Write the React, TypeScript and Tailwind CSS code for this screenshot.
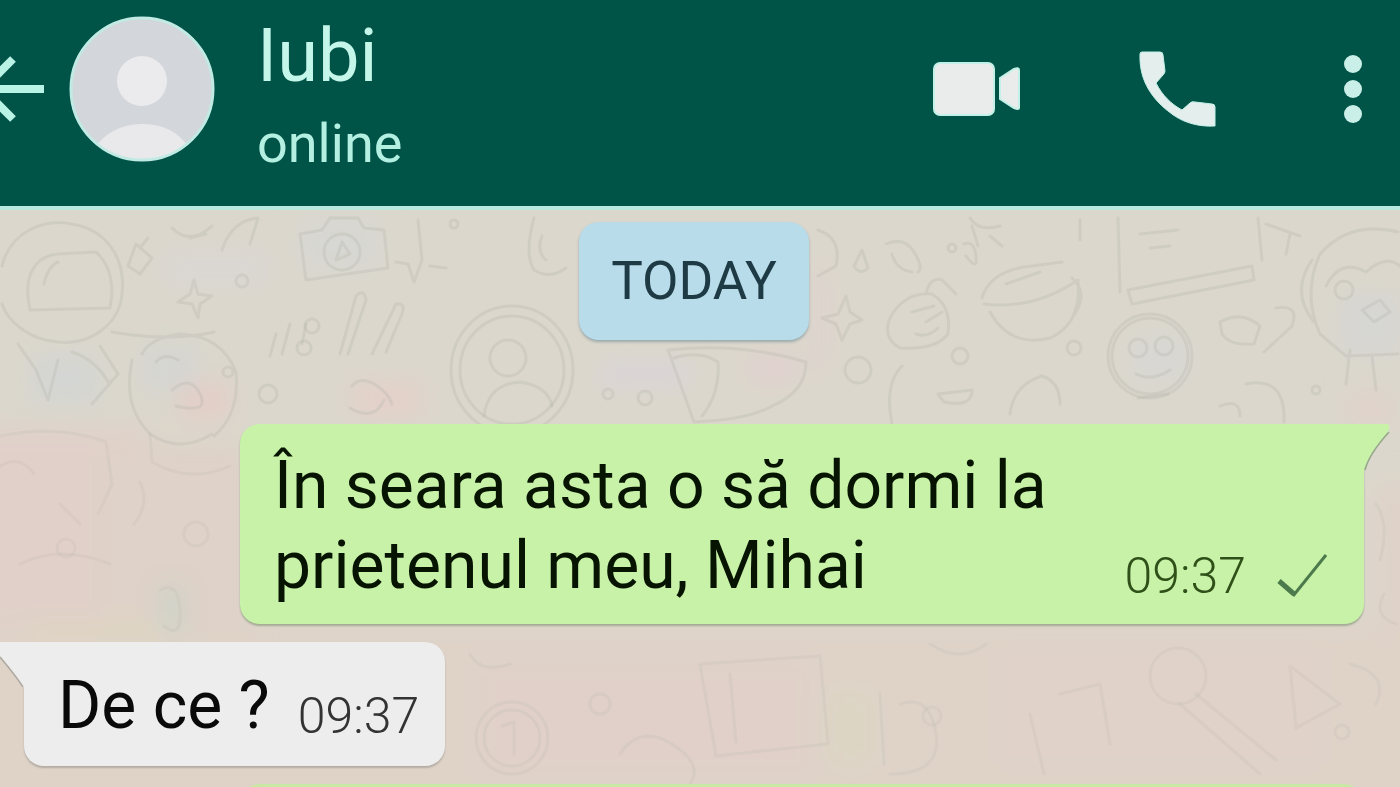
import type { ReactNode } from "react";

type Message = { id: number; text: string; time: string; mine: boolean };

const messages: Message[] = [
  { id: 1, text: "În seara asta o să dormi la prietenul meu, Mihai", time: "09:37", mine: true },
  { id: 2, text: "De ce ?", time: "09:37", mine: false },
];

function BackIcon() {
  return (
    <svg viewBox="0 0 44 72" className="h-[72px] w-11" fill="none" stroke="#b9f3e6" strokeWidth="8">
      <path d="M-8 36H44M13 6L-17 36L13 66" />
    </svg>
  );
}

function Avatar() {
  return (
    <svg viewBox="0 0 146 146" className="h-[146px] w-[146px]">
      <defs>
        <clipPath id="avatar">
          <circle cx="73" cy="73" r="72" />
        </clipPath>
      </defs>
      <g clipPath="url(#avatar)">
        <rect width="146" height="146" fill="#d3d6da" />
        <circle cx="73" cy="65" r="25" fill="#ebebee" />
        <path d="M24 146V134C36 116 54 108 74 108S110 116 122 134V146Z" fill="#e9e9ec" />
      </g>
      <circle cx="73" cy="73" r="71" fill="none" stroke="#c0eae3" strokeWidth="3" />
    </svg>
  );
}

function VideoIcon() {
  return (
    <svg viewBox="0 0 88 56" className="h-14 w-[88px]" fill="#e9eceb" stroke="#c3f1e8" strokeWidth="2">
      <rect x="1" y="2" width="60" height="52" rx="6" />
      <path d="M67 17L81 8Q86 6 86 9V47Q86 49 81 47L67 38Z" />
    </svg>
  );
}

function PhoneIcon() {
  return (
    <svg viewBox="0 0 78 78" className="h-[78px] w-[78px]" fill="#e3eeed" stroke="#c3f1e8" strokeWidth="1">
      <path d="M3 2H21Q24 2 24 5L26 21Q26 23 24 25L17 33C23 45 32 54 43 60L51 53Q53 51 56 52L73 54Q76 54 76 57V76C58 77 42 72 29 61C10 46 0 27 1 4Q1 2 3 2Z" />
    </svg>
  );
}

function MoreIcon() {
  return (
    <svg viewBox="0 0 20 70" className="h-[70px] w-5" fill="#c9efe8">
      <circle cx="10" cy="10" r="9" />
      <circle cx="10" cy="35" r="9" />
      <circle cx="10" cy="60" r="9" />
    </svg>
  );
}

function CheckIcon() {
  return (
    <svg viewBox="0 0 52 46" className="h-[46px] w-[52px]" fill="none" stroke="#4c7a4c">
      <path d="M3 28L18 41" strokeWidth="5" />
      <path d="M17 43L50 2" strokeWidth="3" />
    </svg>
  );
}

function IconButton({ label, children }: { label: string; children: ReactNode }) {
  return (
    <button type="button" aria-label={label} className="flex h-[146px] shrink-0 items-center">
      {children}
    </button>
  );
}

function Wallpaper() {
  return (
    <svg
      viewBox="0 206 1400 581"
      preserveAspectRatio="xMidYMin slice"
      className="absolute inset-0 h-full w-full"
      aria-hidden="true"
    >
      <defs>
        <filter id="tint" x="-30%" y="-30%" width="160%" height="160%">
          <feGaussianBlur stdDeviation="12" />
        </filter>
      </defs>
      <rect y="206" width="1400" height="581" fill="#dbd7cc" />

      {/* soft colour patches */}
      <g filter="url(#tint)">
        <rect x="-40" y="425" width="190" height="200" fill="#e1d0c9" />
        <rect x="100" y="440" width="150" height="190" fill="#dfd2c8" />
        <rect x="-40" y="620" width="1480" height="200" fill="#dfd3c8" />
        <rect x="480" y="660" width="330" height="110" fill="#e0d0c9" />
        <rect x="1000" y="650" width="320" height="110" fill="#e0d1c9" />
        <rect x="1372" y="480" width="60" height="160" fill="#dfd3c9" />
        <rect x="160" y="245" width="110" height="40" fill="#dad7d3" />
        <rect x="30" y="350" width="70" height="50" fill="#d4d6d3" />
        <rect x="140" y="340" width="60" height="50" fill="#d5d6d2" />
        <rect x="300" y="215" width="80" height="50" fill="#d7d7d3" />
        <rect x="180" y="380" width="50" height="34" fill="#e4cdc7" />
        <rect x="352" y="378" width="70" height="34" fill="#e4d0c9" />
        <rect x="600" y="360" width="90" height="20" fill="#d9d4da" />
        <rect x="750" y="352" width="44" height="24" fill="#e2cfd0" />
        <rect x="812" y="260" width="18" height="110" fill="#dfd3cf" />
        <rect x="1130" y="330" width="60" height="50" fill="#d8d7d3" />
        <rect x="1340" y="290" width="60" height="60" fill="#d6d6d3" />
        <rect x="1350" y="390" width="40" height="30" fill="#e2d1cc" />
        <rect x="158" y="580" width="28" height="50" fill="#d0d3c9" />
        <rect x="30" y="620" width="130" height="14" fill="#ded6bf" />
        <rect x="830" y="690" width="40" height="70" fill="#dcd5c3" />
      </g>

      <g fill="none" stroke="#b9b8ae" strokeWidth="3" strokeOpacity="0.32" strokeLinecap="round" strokeLinejoin="round">
        {/* astronaut */}
        <path d="M2 262C10 228 44 214 72 220C108 226 126 256 122 290C120 318 92 342 58 338C30 336 8 318 2 300" />
        <path d="M30 306C22 270 36 252 58 250L96 248C112 262 114 284 110 304Z" />
        <path d="M44 280Q48 262 58 258M18 340L36 366L48 396M48 396L58 356M100 342L118 370L92 400M72 348Q96 356 108 378" />
        <path d="M136 240L152 254L140 270L128 262ZM140 244L148 234M172 224Q190 242 212 222M190 234L206 230" />
        <path d="M194 276L198 290L212 292L200 300L198 314L192 300L178 298L190 290Z" />
        <circle cx="242" cy="277" r="6" />
        <path d="M222 246Q232 216 258 214L250 240" />

        {/* camera */}
        <path d="M300 230L322 226L330 214H358L364 224L384 226L388 264L306 276Z" />
        <circle cx="342" cy="248" r="18" />
        <path d="M336 256L342 238L350 250Z" />
        <path d="M276 330L270 352M290 320L282 350M306 320L302 340M340 350L356 292Q364 284 366 296L348 350M372 350L396 300Q406 298 402 310L386 348" />
        <circle cx="312" cy="322" r="7" />
        <circle cx="304" cy="344" r="7" />
        <path d="M418 216L422 256L414 278L408 260L396 258M430 262L446 264" />

        {/* face */}
        <path d="M112 328Q170 338 214 328M142 350Q150 334 180 330Q222 332 236 368Q240 410 214 432" />
        <path d="M132 356C126 386 130 410 150 430Q180 450 212 430M156 358Q164 348 178 356M172 386Q190 370 200 390T176 402" />
        <circle cx="268" cy="390" r="9" />
        <circle cx="228" cy="368" r="5" />
        <path d="M352 382Q360 372 374 380T392 400M350 404Q374 418 384 396" />

        {/* avatar coin */}
        <ellipse cx="512" cy="366" rx="61" ry="64" />
        <ellipse cx="512" cy="366" rx="52" ry="54" />
        <circle cx="508" cy="354" r="18" />
        <path d="M484 412Q488 380 520 378Q548 382 552 402" />
        <path d="M534 214Q524 250 534 266Q550 276 566 264M542 232Q536 248 546 256" />
        <circle cx="454" cy="220" r="4" />

        {/* pizza slice and small shapes */}
        <path d="M668 346Q740 338 806 358Q806 388 772 402Q748 416 694 418ZM674 354Q700 346 718 358Q720 390 702 412" />
        <circle cx="608" cy="390" r="5" />
        <circle cx="645" cy="394" r="7" />
        <path d="M818 226Q842 234 836 262L818 272M846 292L838 310L822 314L836 320L842 336L850 320L862 316L850 308Z" />
        <path d="M862 246L868 264Q860 272 854 262ZM886 240Q904 232 914 248T918 268M892 250Q896 266 912 268" />
        <circle cx="952" cy="244" r="4" />
        <path d="M964 240Q974 236 976 252T966 252M972 222L978 242M990 232L1002 242" />
        <path d="M970 214Q978 228 1000 222M1080 216V236M1140 230L1178 226M1150 244L1170 242" />

        {/* bear */}
        <path d="M890 314Q904 288 932 290Q952 302 948 330Q936 346 900 344Q882 334 890 314ZM926 290Q930 272 942 276L956 290" />
        <path d="M912 308L934 302M926 318L942 308M916 330Q928 334 938 324" />
        {/* bowl */}
        <path d="M982 294Q990 266 1032 262L1062 258M984 300Q1034 306 1078 276Q1082 320 1050 334Q1010 344 990 308M1006 280L1040 268M1072 274Q1090 290 1072 314" />
        {/* brush */}
        <path d="M1128 286L1252 262L1254 276L1132 300ZM1118 214L1120 288M1258 214L1262 256M1266 220L1300 232M1290 230L1286 250" />
        {/* smiley */}
        <circle cx="1150" cy="352" r="42" />
        <circle cx="1150" cy="352" r="38" />
        <circle cx="1138" cy="344" r="9" />
        <circle cx="1164" cy="342" r="9" />
        <path d="M1136 370Q1152 378 1170 366M1138 394L1168 390" />
        <path d="M1220 318Q1242 306 1260 322L1254 340Q1230 342 1222 330ZM1276 304Q1300 300 1292 322L1264 348" />
        <circle cx="1074" cy="344" r="7" />
        <circle cx="960" cy="352" r="8" />
        <circle cx="858" cy="366" r="13" />
        <path d="M892 420Q884 380 902 362M938 390L972 386Q972 404 944 398ZM1010 410Q1014 380 1042 372Q1060 378 1060 400M1220 402Q1240 394 1240 412M1246 380Q1286 372 1284 418" />
        {/* penguin */}
        <path d="M1398 228Q1350 216 1320 250Q1302 290 1320 330L1346 352L1398 350M1312 256Q1290 288 1314 318M1326 282Q1340 254 1366 268Q1386 250 1400 262M1350 346L1346 380M1372 352L1376 386" />
        <circle cx="1344" cy="286" r="9" />
        <path d="M1362 306L1380 296L1390 308L1374 318Z" />
        <circle cx="1316" cy="386" r="4" />

        {/* lower rows */}
        <g strokeOpacity="0.2">
          <path d="M0 432Q60 420 106 438L112 480L98 510M0 462Q20 450 34 470M60 500L80 520M20 560Q60 540 110 560" />
          <circle cx="66" cy="544" r="9" />
          <circle cx="196" cy="530" r="12" />
          <path d="M140 478Q150 500 134 520M150 430L152 458Q190 480 230 462M160 586Q178 576 180 606T164 622" />
          <circle cx="512" cy="734" r="36" />
          <circle cx="512" cy="734" r="28" />
          <path d="M502 722L514 718V750M470 650Q480 670 510 660M620 750Q640 720 672 740T690 780M700 660L820 652L828 740L716 752ZM730 670L736 738" />
          <circle cx="932" cy="712" r="9" />
          <circle cx="600" cy="700" r="10" />
          <path d="M880 690L884 760M900 700Q930 690 936 730T890 770M1030 710L1044 770M1060 690L1100 680L1110 740" />
          <circle cx="1178" cy="672" r="28" />
          <path d="M1180 700L1260 770M1196 690L1276 756M1290 662L1340 700L1296 724ZM1350 660Q1390 670 1376 700" />
          <circle cx="1342" cy="728" r="7" />
          <path d="M930 640Q960 660 986 640M1376 500Q1390 520 1380 556M1384 590Q1372 612 1396 620" />
        </g>
      </g>
    </svg>
  );
}

function Tail({ mine }: { mine: boolean }) {
  if (mine) {
    return (
      <svg viewBox="0 0 30 50" className="absolute top-0 left-full -ml-0.5 h-[50px] w-[30px]">
        <path d="M0 0H26Q29 2 26 8Q6 30 2 46V50H0Z" fill="#c8f2a8" />
        <path d="M27 8Q7 30 3 46" fill="none" stroke="#93a886" strokeWidth="1.5" />
      </svg>
    );
  }
  return (
    <svg viewBox="0 0 26 50" className="absolute top-0 right-full -mr-0.5 h-[50px] w-[26px]">
      <path d="M26 0H0V14Q16 34 24 46V50H26Z" fill="#ededed" />
      <path d="M0 15Q16 34 23 45" fill="none" stroke="#aeaaa2" strokeWidth="1.5" />
    </svg>
  );
}

function Bubble({ message }: { message: Message }) {
  if (message.mine) {
    return (
      <div className="relative mr-9 ml-60 flex items-end justify-between rounded-[20px] rounded-tr-none bg-[#c8f2a8] pt-[22px] pr-9 pb-[18px] pl-[34px] shadow-[0_2px_2px_#a3ab94]">
        <Tail mine />
        <p className="max-w-[800px] text-[66px] leading-[80px] text-[#071402]">{message.text}</p>
        <div className="flex shrink-0 items-center gap-[30px]">
          <time className="text-[50px] leading-[60px] font-light text-[#2f5018]">{message.time}</time>
          <CheckIcon />
        </div>
      </div>
    );
  }
  return (
    <div className="relative ml-6 flex items-end gap-7 self-start rounded-[20px] rounded-tl-none bg-[#ededed] pt-6 pr-[26px] pb-5 pl-[34px] shadow-[0_2px_2px_#b3aca3]">
      <Tail mine={false} />
      <p className="text-[66px] leading-[80px] text-[#0a0a0a]">{message.text}</p>
      <time className="text-[50px] leading-[60px] font-light text-[#333333]">{message.time}</time>
    </div>
  );
}

export default function App() {
  return (
    <div className="flex h-screen flex-col overflow-hidden font-['Roboto',sans-serif]">
      <header className="flex shrink-0 items-start bg-[#005347] pt-4 pb-[30px]">
        <IconButton label="Back">
          <BackIcon />
        </IconButton>
        <div className="ml-[25px] shrink-0">
          <Avatar />
        </div>
        <div className="ml-[42px] min-w-0 flex-1">
          <h1 className="text-[74px] leading-[80px] text-[#c4f7ea]">Iubi</h1>
          <p className="mt-4 text-[54px] leading-[64px] text-[#b4f0e2]">online</p>
        </div>
        <div className="mr-[37px] flex shrink-0 items-center">
          <IconButton label="Video call">
            <VideoIcon />
          </IconButton>
          <div className="ml-[118px] flex gap-[126px]">
            <IconButton label="Voice call">
              <PhoneIcon />
            </IconButton>
            <IconButton label="More options">
              <MoreIcon />
            </IconButton>
          </div>
        </div>
      </header>

      <main className="relative flex-1 overflow-hidden border-t-4 border-[#b9e9de]">
        <Wallpaper />
        <div className="relative flex flex-col pt-3">
          <div className="mb-[84px] ml-[-12px] self-center rounded-[20px] bg-[#b8dcea] px-8 py-5 text-[53px] leading-[78px] text-[#1e3a44] shadow-[0_2px_3px_#9aa9ab]">
            TODAY
          </div>
          <div className="flex flex-col gap-[18px]">
            {messages.map((m) => (
              <Bubble key={m.id} message={m} />
            ))}
            <div className="mr-9 ml-60 h-20 rounded-[20px] bg-[#c8e8a4]" />
          </div>
        </div>
      </main>
    </div>
  );
}
